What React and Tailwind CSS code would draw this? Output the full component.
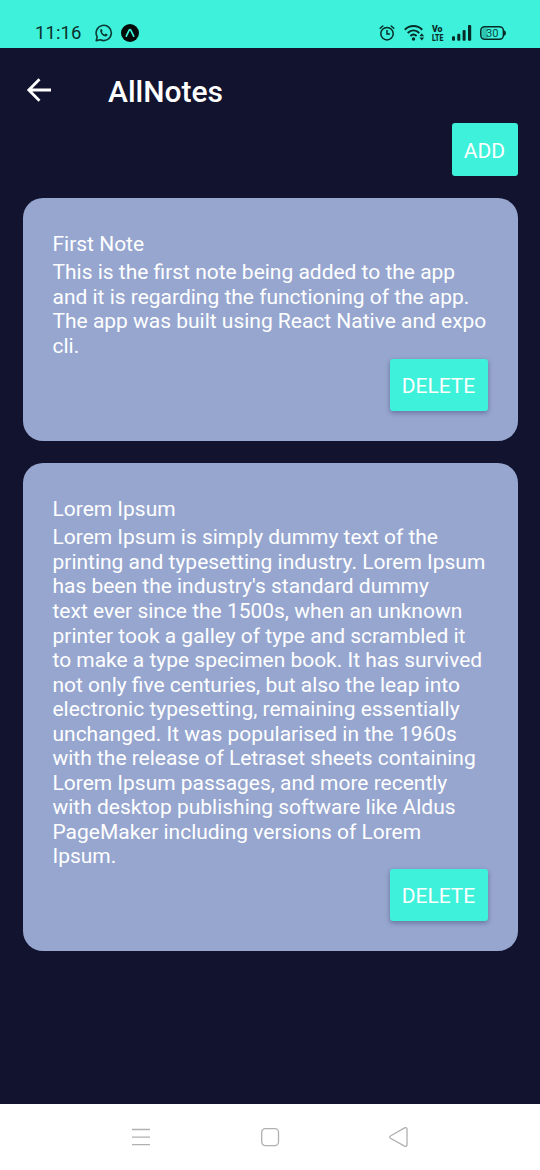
const NOTES = [
  {
    title: 'First Note',
    lines: [
      'This is the first note being added to the app',
      'and it is regarding the functioning of the app.',
      'The app was built using React Native and expo',
      'cli.',
    ],
  },
  {
    title: 'Lorem Ipsum',
    lines: [
      'Lorem Ipsum is simply dummy text of the',
      'printing and typesetting industry. Lorem Ipsum',
      "has been the industry's standard dummy",
      'text ever since the 1500s, when an unknown',
      'printer took a galley of type and scrambled it',
      'to make a type specimen book. It has survived',
      'not only five centuries, but also the leap into',
      'electronic typesetting, remaining essentially',
      'unchanged. It was popularised in the 1960s',
      'with the release of Letraset sheets containing',
      'Lorem Ipsum passages, and more recently',
      'with desktop publishing software like Aldus',
      'PageMaker including versions of Lorem',
      'Ipsum.',
    ],
  },
];

function WhatsAppIcon() {
  return (
    <svg className="ml-[13px] h-[18px] w-[18px]" viewBox="0 0 18 18" fill="none" stroke="#0b3a35">
      <path d="M1.2 16.6 2.2 12.8A7.6 7.6 0 1 1 5.3 15.7Z" strokeWidth="1.6" strokeLinejoin="round" />
      <path d="M5.2 5.9c.5-1.1 1.3-1.2 1.7-.5l.7 1.5-.7 1c.7 1.3 1.6 2.1 2.9 2.7l1-1 1.7.9c.3.7-.5 1.7-1.6 1.9-2.7.2-5.9-3.2-5.7-6.5Z" fill="#0b3a35" stroke="none" />
    </svg>
  );
}

function ExpoIcon() {
  return (
    <svg className="ml-[7.500px] h-[18px] w-[18px]" viewBox="0 0 18 18">
      <circle cx="9" cy="9" r="9" fill="#020b0a" />
      <path d="M5.3 12.2 8.2 6.2c.4-.7 1.2-.7 1.6 0l2.900 6" fill="none" stroke="#3ef1da" strokeWidth="1.7" strokeLinecap="round" strokeLinejoin="round" />
    </svg>
  );
}

function AlarmIcon() {
  return (
    <svg className="h-[18px] w-4" viewBox="0 0 16 18" fill="none" stroke="#062b27" strokeWidth="1.5" strokeLinecap="round">
      <circle cx="8" cy="9.7" r="6.2" />
      <path d="M8 6.6v3.4h2.4M1.2 4.2 3.8 2M14.8 4.2 12.2 2" />
    </svg>
  );
}

function WifiIcon() {
  return (
    <svg className="ml-[9px] h-[18px] w-[21px]" viewBox="0 0 21 18" fill="none" stroke="#062b27" strokeWidth="2">
      <path d="M.8 5.7C5.8.9 13.2.9 18.2 5.7" />
      <path d="M3.7 8.9C7.2 5.6 11.8 5.6 15.3 8.9" />
      <path d="M6.4 12C8.3 10.2 10.7 10.2 12.6 12" />
      <circle cx="9.5" cy="15" r="1.7" fill="#062b27" stroke="none" />
      <path d="m15.5 12.2 2.3-2.900 2.3 2.900ZM15.5 13.5h4.6l-2.3 2.900Z" fill="#062b27" stroke="none" />
    </svg>
  );
}

function VolteIcon() {
  return (
    <svg className="ml-[6px] h-[18px] w-[13px] overflow-visible" viewBox="0 0 13 18" fill="#062b27">
      <text x="1" y="8.4" textLength="10.5" lengthAdjust="spacingAndGlyphs" className="font-['Roboto',sans-serif] text-[9px] font-black">Vo</text>
      <text x="1" y="16.5" textLength="11.3" lengthAdjust="spacingAndGlyphs" className="font-['Roboto',sans-serif] text-[9px] font-black">LTE</text>
    </svg>
  );
}

function SignalIcon() {
  return (
    <svg className="ml-[8px] h-[18px] w-5" viewBox="0 0 20 18" fill="#062b27">
      <rect x="0" y="12.3" width="3" height="4.4" rx="1" />
      <rect x="5.3" y="9.7" width="3" height="7" rx="1" />
      <rect x="10.6" y="6" width="3" height="10.7" rx="1" />
      <rect x="16" y="1" width="3.2" height="15.7" rx="1" />
    </svg>
  );
}

function Battery() {
  return (
    <svg className="ml-2 h-[18px] w-[26px]" viewBox="0 0 26 18">
      <path d="M3.5 4h4v10h-4Q2.2 14 2.2 12.5v-7Q2.2 4 3.5 4Z" fill="#2dc5b2" />
      <rect x=".8" y="2.7" width="22.6" height="12.6" rx="4" fill="none" stroke="#062b27" strokeWidth="1.5" />
      <path d="M24 6.2q2 .4 2 2.8t-2 2.8Z" fill="#062b27" />
      <text x="12.2" y="12.9" textAnchor="middle" textLength="12.5" lengthAdjust="spacingAndGlyphs" fill="#0b4a43" className="font-['Roboto',sans-serif] text-[11px]">30</text>
    </svg>
  );
}

function StatusBar() {
  return (
    <header className="flex h-12 shrink-0 items-start justify-between bg-[#3ef1da] pt-6 pr-[34px] pl-[35px]">
      <div className="flex h-[18px] items-center">
        <span className="w-[47px] font-['Roboto',sans-serif] text-[18.500px] leading-[18px] tracking-[0.1px] whitespace-nowrap text-[#0b302d]">11:16</span>
        <WhatsAppIcon />
        <ExpoIcon />
      </div>
      <div className="flex h-[18px] items-center">
        <AlarmIcon />
        <WifiIcon />
        <VolteIcon />
        <SignalIcon />
        <Battery />
      </div>
    </header>
  );
}

function DeleteButton() {
  return (
    <button className="mt-[0.4px] h-[52px] w-[98px] self-end rounded-[3px] bg-[#3ef1da] pt-[2px] text-[21px] leading-6 text-white shadow-[0_2px_5px_rgba(20,20,60,0.35)]">
      DELETE
    </button>
  );
}

function NoteCard({ note }) {
  return (
    <article className="flex flex-col rounded-[20px] bg-[#96a6cf] px-[30px] pt-[33.600px] pb-[30px] text-[20.970px] leading-[24.54px] text-white">
      <h2 className="mb-1">{note.title}</h2>
      <div className="whitespace-nowrap">
        {note.lines.map((line) => (
          <p key={line}>{line}</p>
        ))}
      </div>
      <DeleteButton />
    </article>
  );
}

function NavBar() {
  return (
    <nav className="flex h-[66px] shrink-0 items-center justify-between bg-white px-[131px]">
      <svg className="h-5 w-5" viewBox="0 0 20 20" stroke="#b0b0b0" strokeWidth="1.3">
        <path d="M1 2.5h18M1 10.2h18M1 17.7h18" />
      </svg>
      <svg className="h-5 w-5" viewBox="0 0 20 20" fill="none" stroke="#b0b0b0" strokeWidth="1.3">
        <rect x="1.7" y="1.6" width="16.8" height="17" rx="3.5" />
      </svg>
      <svg className="h-5 w-5" viewBox="0 0 20 20" fill="none" stroke="#b0b0b0" strokeWidth="1.3" strokeLinejoin="round">
        <path d="M1.400 9 15.600.9Q18 .2 18 2.300v15.400Q18 19.800 15.600 19.100L1.400 11.200Q-.1 10.100 1.400 9Z" />
      </svg>
    </nav>
  );
}

export default function App() {
  return (
    <div className="flex h-[1170px] w-[540px] flex-col overflow-hidden bg-[#12132f] font-['Roboto',sans-serif]">
      <StatusBar />
      <div className="flex h-[75px] shrink-0 items-center pt-[12px] pl-[26px]">
        <svg className="-mt-1 h-[26px] w-[26px]" viewBox="0 0 26 26" fill="none" stroke="white" strokeWidth="2.8">
          <path d="M25 13H3M13.5 2.2 2.8 13l10.700 10.800" />
        </svg>
        <h1 className="ml-14 text-[30px] leading-9 font-medium text-white">AllNotes</h1>
      </div>
      <main className="flex min-h-0 flex-1 flex-col px-[22.5px]">
        <button className="h-[52.5px] w-[66px] shrink-0 self-end rounded-[3px] bg-[#3ef1da] pt-[3px] text-[21px] leading-6 text-white">
          ADD
        </button>
        <div className="mt-[22.5px] flex flex-col gap-[22.5px]">
          {NOTES.map((note) => (
            <NoteCard key={note.title} note={note} />
          ))}
        </div>
      </main>
      <NavBar />
    </div>
  );
}
